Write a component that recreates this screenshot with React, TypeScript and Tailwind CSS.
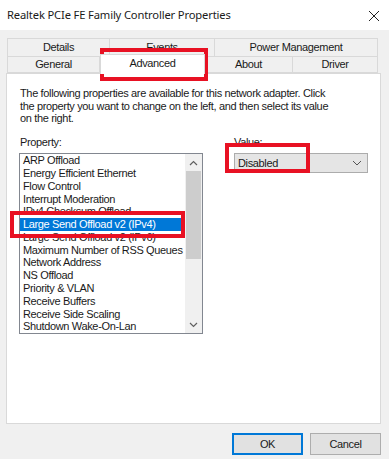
import React from "react";

const items = [
  "ARP Offload",
  "Energy Efficient Ethernet",
  "Flow Control",
  "Interrupt Moderation",
  "IPv4 Checksum Offload",
  "Large Send Offload v2 (IPv4)",
  "Large Send Offload v2 (IPv6)",
  "Maximum Number of RSS Queues",
  "Network Address",
  "NS Offload",
  "Priority & VLAN",
  "Receive Buffers",
  "Receive Side Scaling",
  "Shutdown Wake-On-Lan",
];

export default function App() {
  return (
    <div
      className="relative w-[389px] h-[459px] bg-[#f0f0f0] overflow-hidden text-[#1a1a1a] tracking-[-0.35px]"
      style={{ fontFamily: '"Liberation Sans", Arial, sans-serif' }}
    >
      {/* Title bar */}
      <div className="h-[30px] bg-white flex items-center justify-between pl-[7px] pr-[8px] pt-[1px]">
        <span className="text-[11.2px] tracking-[-0.15px]" style={{ fontFamily: '"Noto Sans", "Liberation Sans", sans-serif' }}>
          Realtek PCIe FE Family Controller Properties
        </span>
        <svg width="12" height="12" viewBox="0 0 12 12" className="mr-[1px]">
          <path d="M1 1 L11 11 M11 1 L1 11" stroke="#222" strokeWidth="1" />
        </svg>
      </div>

      {/* Tabs */}
      <div className="pt-[8px] pl-[7px] pr-[11px] text-[11px]">
        <div className="flex h-[19px]">
          <div className="w-[103px] border border-[#d9d9d9] flex items-center justify-center">Details</div>
          <div className="w-[105px] border border-l-0 border-[#d9d9d9] flex items-center justify-center">Events</div>
          <div className="flex-1 border border-l-0 border-[#d9d9d9] flex items-center justify-center">Power Management</div>
        </div>
        <div className="flex h-[16px] items-end">
          <div className="w-[93px] h-[16px] border border-t-0 border-[#d9d9d9] flex items-center justify-center">General</div>
          <div className="relative z-10 w-[105px] h-[20px] -mb-[1px] bg-white border border-b-0 border-[#d9d9d9] flex items-center justify-center pb-[2px]">Advanced</div>
          <div className="w-[88px] h-[16px] border border-t-0 border-l-0 border-[#d9d9d9] flex items-center justify-center">About</div>
          <div className="flex-1 h-[16px] border border-t-0 border-l-0 border-[#d9d9d9] flex items-center justify-center">Driver</div>
        </div>
      </div>

      {/* Panel */}
      <div className="ml-[6px] w-[375px] h-[351px] bg-white border border-[#d9d9d9] pl-[13px] pt-[13px] text-[11px]">
        <p className="leading-[12.7px] whitespace-nowrap">
          The following properties are available for this network adapter. Click
          <br />
          the property you want to change on the left, and then select its value
          <br />
          on the right.
        </p>
        <div className="flex mt-[11px]">
          <div className="w-[183px]">
            <div className="leading-[13px]">Property:</div>
            <div className="mt-[4px] -ml-[1px] h-[181px] border border-[#828790] flex">
              <div className="flex-1">
                {items.map((it, i) => (
                  <div
                    key={it}
                    className={
                      "h-[12.8px] leading-[12.8px] pl-[3px] whitespace-nowrap " +
                      (i === 5 ? "bg-[#0078d7] text-white" : "")
                    }
                  >
                    {it}
                  </div>
                ))}
              </div>
              <div className="w-[17px] bg-[#f0f0f0] flex flex-col items-center">
                <svg width="9" height="6" viewBox="0 0 9 6" className="mt-[6px]">
                  <path d="M1 5 L4.5 1.5 L8 5" fill="none" stroke="#606060" strokeWidth="1.2" />
                </svg>
                <div className="mt-[5px] w-[15px] h-[88px] bg-[#cdcdcd]" />
                <div className="flex-1" />
                <svg width="9" height="6" viewBox="0 0 9 6" className="mb-[5px]">
                  <path d="M1 1 L4.5 4.5 L8 1" fill="none" stroke="#606060" strokeWidth="1.2" />
                </svg>
              </div>
            </div>
          </div>
          <div className="ml-[31px]">
            <div className="leading-[13px]">Value:</div>
            <div className="mt-[4px] w-[134px] h-[20px] bg-[#e5e5e5] border border-[#acacac] flex items-center justify-between pl-[3px] pr-[5px]">
              <span>Disabled</span>
              <svg width="10" height="6" viewBox="0 0 10 6">
                <path d="M1 1 L5 5 L9 1" fill="none" stroke="#555" strokeWidth="1" />
              </svg>
            </div>
          </div>
        </div>
      </div>

      {/* Buttons */}
      <div className="flex justify-end gap-[7px] pr-[8px] mt-[9px] text-[11px]">
        <div className="w-[71px] h-[22px] bg-[#e1e1e1] border-2 border-[#0078d7] flex items-center justify-center">OK</div>
        <div className="w-[71px] h-[22px] bg-[#e1e1e1] border border-[#adadad] flex items-center justify-center">Cancel</div>
      </div>

      {/* Red annotation boxes */}
      <div className="absolute left-[100px] top-[48px] w-[108px] h-[33px] border-[4px] border-[#e81123]" />
      <div className="absolute left-[10px] top-[211px] w-[175px] h-[27px] border-[4px] border-[#e81123]" />
      <div className="absolute left-[225px] top-[143px] w-[85px] h-[30px] border-[4px] border-[#e81123]" />
    </div>
  );
}
